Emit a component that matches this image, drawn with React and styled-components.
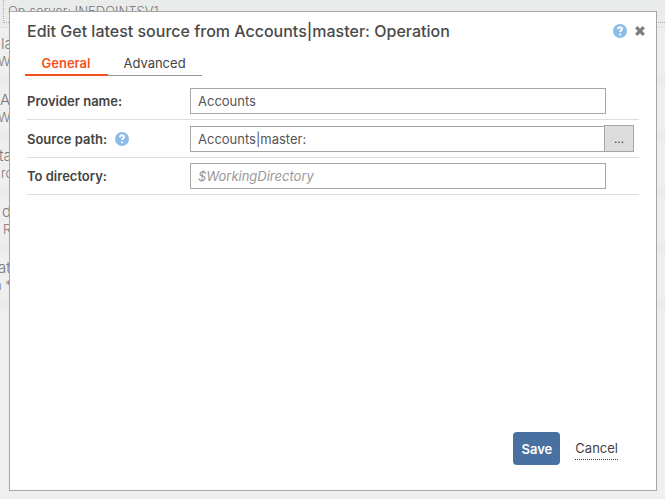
import React from "react";
import styled, { createGlobalStyle } from "styled-components";

const GlobalStyle = createGlobalStyle`
  * { box-sizing: border-box; }
  html, body, #root { height: 100%; }
  body {
    margin: 0;
    overflow: hidden;
    background: #efefef;
    color: #4a4a4a;
    font-family: Inter, "Liberation Sans", sans-serif;
    font-size: 13px;
  }
`;

const Plan = styled.main`
  background: #eaeceb;
  color: #777;
  font-weight: 300;
  padding-bottom: 8px;
`;

const ServerBlock = styled.div`
  height: 23px;
  margin: 0 0 4px 3px;
  padding-left: 4px;
  border: 1px dotted #aaa;
  border-top: 0;
  border-right: 0;
  line-height: 22px;
`;

const Steps = styled.div`
  display: flex;
  flex-direction: column;
  gap: 8px;
  border-top: 1px solid #e2e4e3;
`;

const Step = styled.div`
  height: 48px;
  padding: 6px 0;
  background: #efefef;
  overflow: hidden;
  white-space: nowrap;
`;

const StepTitle = styled.div`
  text-indent: ${(p) => p.$indent || 0}px;
  font-size: 15px;
  line-height: 19px;
`;

const StepDetail = styled.div`
  text-indent: ${(p) => p.$indent || 0}px;
  font-size: 13px;
  line-height: 16px;
`;

const Overlay = styled.div`
  position: fixed;
  inset: 0;
  display: flex;
  padding: 11px 8px 8px 9px;
`;

const Dialog = styled.section`
  flex: 1;
  display: flex;
  flex-direction: column;
  background: #fff;
  border: 1px solid #a6a6a6;
  padding: 10px 17px 25px;
`;

const Header = styled.header`
  display: flex;
  align-items: center;
  height: 18px;
`;

const Title = styled.h1`
  flex: 1;
  margin: 0;
  color: #4a4a4a;
  font-size: 16px;
  font-weight: 500;
  line-height: 18px;
  white-space: nowrap;
`;

const IconButton = styled.button`
  display: inline-flex;
  padding: 0;
  border: 0;
  background: none;
  margin-left: ${(p) => p.$gap || 0}px;
  margin-right: ${(p) => p.$end || 0}px;
`;

const Tabs = styled.div`
  display: flex;
  align-self: flex-start;
  margin: 12px 0 0 -2px;
`;

const Tab = styled.button`
  width: ${(p) => p.$width}px;
  height: 24px;
  padding: 0 1px 2px 0;
  border: 0;
  background: none;
  box-shadow: inset 0 ${(p) => (p.$active ? "-2px #f4511e" : "-1px #9297a0")};
  color: ${(p) => (p.$active ? "#f4511e" : "#444")};
  font: inherit;
  font-weight: ${(p) => (p.$active ? 600 : 400)};
  line-height: 22px;
`;

const Form = styled.form`
  flex: 1;
  display: flex;
  flex-direction: column;
`;

const Fields = styled.div`
  margin-top: 6px;
`;

const Row = styled.div`
  display: grid;
  grid-template-columns: 163px 1fr;
  align-items: center;
  height: ${(p) => p.$height || 38}px;
  border-bottom: 1px solid #ddd;
`;

const LabelCell = styled.div`
  display: flex;
  align-items: center;
`;

const Label = styled.label`
  color: #444;
  font-weight: 600;
`;

const Control = styled.div`
  display: flex;
  align-items: flex-end;
  padding-right: ${(p) => (p.$wide ? 5 : 33)}px;
`;

const Input = styled.input`
  flex: 1;
  min-width: 0;
  height: 26px;
  padding: 0 7px;
  border: 1px solid #a6a6a6;
  border-radius: 0;
  background: #fff;
  color: #555;
  font: inherit;
  outline: 0;
  &::placeholder { color: #999; font-style: italic; opacity: 1; }
`;

const Browse = styled.button`
  width: 30px;
  height: 27px;
  margin-left: -1px;
  padding: 0;
  border: 1px solid #a6a6a6;
  background: #ddd;
  color: #333;
  font: 12px "Liberation Sans", sans-serif;
`;

const Footer = styled.footer`
  display: flex;
  gap: 15px;
  justify-content: flex-end;
  align-items: center;
  margin-top: auto;
  padding-right: 21px;
`;

const Save = styled.button`
  width: 47px;
  height: 33px;
  padding: 0;
  border: 0;
  border-radius: 4px;
  background: #4870a0;
  color: #fff;
  font: inherit;
  font-weight: 600;
`;

const Cancel = styled.a`
  color: #444;
  border-bottom: 1px dotted #333;
  line-height: 21px;
  text-decoration: none;
`;

const HelpIcon = () => (
  <svg width="14" height="14" viewBox="0 0 14 14" aria-hidden="true">
    <circle cx="7" cy="7" r="7" fill="#8bbce8" />
    <path d="M5 5.3V5a2 1.7 0 0 1 4 0c0 1.4-1.8 1.3-1.8 3M7.2 9.4v1.8" fill="none" stroke="#fff" strokeWidth="1.9" />
  </svg>
);

const CloseIcon = () => (
  <svg width="10" height="10" viewBox="0 0 10 10" aria-hidden="true">
    <path d="M1.2 1.2l7.6 7.6M8.8 1.2l-7.6 7.6" stroke="#7c7c7c" strokeWidth="3.2" />
  </svg>
);

const steps = [
  { title: "la", detail: "W", indent: 1, detailIndent: -2 },
  { title: "A", detail: "W", detailIndent: -2 },
  { title: "ta", detail: "ro", indent: -1, detailIndent: 1 },
  { title: "d", detail: "R", indent: 2, detailIndent: 3 },
  { title: "at", detail: "n *", indent: -2, detailIndent: -6 },
];

export default function App() {
  return (
    <>
      <GlobalStyle />
      <Plan>
        <ServerBlock>On server: INEDOINTSV1</ServerBlock>
        <Steps>
          {steps.map((s, i) => (
            <Step key={i}>
              <StepTitle $indent={s.indent}>{s.title}</StepTitle>
              <StepDetail $indent={s.detailIndent}>{s.detail}</StepDetail>
            </Step>
          ))}
        </Steps>
      </Plan>
      <Overlay>
        <Dialog role="dialog" aria-labelledby="title">
          <Header>
            <Title id="title">Edit Get latest source from Accounts|master: Operation</Title>
            <IconButton type="button" aria-label="Help"><HelpIcon /></IconButton>
            <IconButton type="button" aria-label="Close" $gap={8} $end={-6}><CloseIcon /></IconButton>
          </Header>
          <Tabs role="tablist">
            <Tab role="tab" aria-selected="true" $active $width={83}>General</Tab>
            <Tab role="tab" aria-selected="false" $width={94}>Advanced</Tab>
          </Tabs>
          <Form>
            <Fields>
              <Row>
                <LabelCell><Label htmlFor="provider">Provider name:</Label></LabelCell>
                <Control><Input id="provider" defaultValue="Accounts" /></Control>
              </Row>
              <Row>
                <LabelCell>
                  <Label htmlFor="source">Source path:</Label>
                  <IconButton type="button" aria-label="Source path help" $gap={8}><HelpIcon /></IconButton>
                </LabelCell>
                <Control $wide>
                  <Input id="source" defaultValue="Accounts|master:" />
                  <Browse type="button" aria-label="Browse">...</Browse>
                </Control>
              </Row>
              <Row $height={37}>
                <LabelCell><Label htmlFor="directory">To directory:</Label></LabelCell>
                <Control><Input id="directory" placeholder="$WorkingDirectory" /></Control>
              </Row>
            </Fields>
            <Footer>
              <Save type="button">Save</Save>
              <Cancel href="#">Cancel</Cancel>
            </Footer>
          </Form>
        </Dialog>
      </Overlay>
    </>
  );
}
